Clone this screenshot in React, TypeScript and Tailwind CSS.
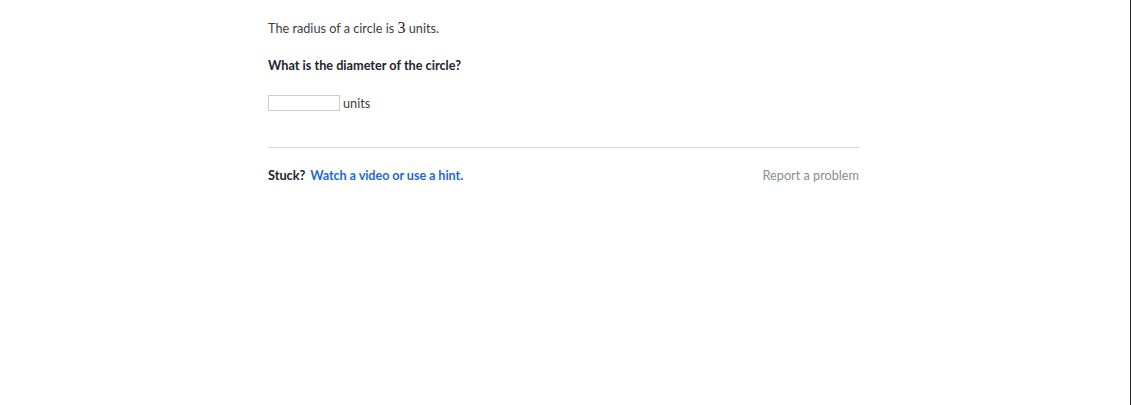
export default function App() {
  return (
    <div className="flex h-[405px] w-[1131px] border-r border-[#222] bg-white font-['Lato',_'Liberation_Sans',_sans-serif] text-[12.7px] text-[#3b3e40]">
      <div className="ml-[268px] w-[591px] pt-[18px]">
        <p className="leading-[20px]">
          The radius of a circle is{' '}
          <span className="font-['Liberation_Serif',_serif] text-[16px] text-[#21242c]">3</span> units.
        </p>
        <p className="mt-[17px] font-bold leading-[20px] text-[#21242c]">What is the diameter of the circle?</p>
        <div className="mt-[18px] flex items-center gap-[3px]">
          <input
            type="text"
            className="h-[16px] w-[72px] border border-[#ccc] bg-white outline-none"
          />
          <span className="leading-[20px]">units</span>
        </div>
        <div className="mt-[34px] border-t border-[#ddd]" />
        <div className="mt-[17px] flex items-center justify-between leading-[20px]">
          <div className="flex items-center gap-[5px]">
            <span className="font-bold text-[#21242c]">Stuck?</span>
            <a className="font-bold tracking-[-0.1px] text-[#1d6ad6]">Watch a video or use a hint.</a>
          </div>
          <a className="text-[#888d93]">Report a problem</a>
        </div>
      </div>
    </div>
  );
}
